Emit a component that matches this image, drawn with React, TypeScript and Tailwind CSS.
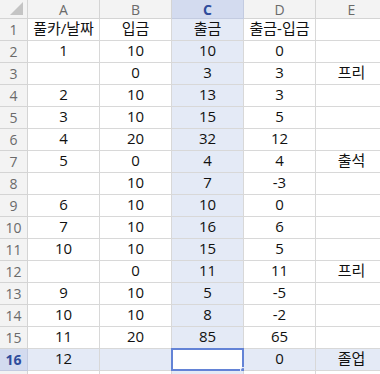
import React from 'react';

const cols = ['A', 'B', 'C', 'D', 'E'];

const rows: string[][] = [
    ['풀카/날짜', '입금', '출금', '출금-입금', ''],
    ['1', '10', '10', '0', ''],
    ['', '0', '3', '3', '프리'],
    ['2', '10', '13', '3', ''],
    ['3', '10', '15', '5', ''],
    ['4', '20', '32', '12', ''],
    ['5', '0', '4', '4', '출석'],
    ['', '10', '7', '-3', ''],
    ['6', '10', '10', '0', ''],
    ['7', '10', '16', '6', ''],
    ['10', '10', '15', '5', ''],
    ['', '0', '11', '11', '프리'],
    ['9', '10', '5', '-5', ''],
    ['10', '10', '8', '-2', ''],
    ['11', '20', '85', '65', ''],
    ['12', '', '', '0', '졸업'],
    ['', '', '', '', ''],
];

const SEL_ROW = 16;
const SEL_COL = 2;

export default function App() {
    return (
        <div
            className="w-[380px] h-[374px] overflow-hidden bg-white text-[#111] select-none"
            style={{ fontFamily: '"Open Sans", "Noto Sans CJK KR", sans-serif' }}
        >
            <div className="grid grid-cols-[28px_72px_72px_72px_72px_72px] w-max">
                {/* corner */}
                <div className="h-[19px] bg-[#f3f3f3] border-r border-b border-[#d4d4d4] relative">
                    <div className="absolute right-[4px] bottom-[3px] w-0 h-0 border-l-[13px] border-l-transparent border-b-[13px] border-b-[#c4c4c4]" />
                </div>
                {cols.map((c, i) => (
                    <div
                        key={c}
                        className={
                            i === SEL_COL
                                ? 'h-[19px] flex items-center justify-center bg-[#d3dbef] border-r border-b border-[#c3cbe0] text-[14px] font-bold text-[#2e4c9c]'
                                : 'h-[19px] flex items-center justify-center bg-[#f3f3f3] border-r border-b border-[#d4d4d4] text-[14px] text-[#6a6a6a]'
                        }
                    >
                        {c}
                    </div>
                ))}

                {rows.map((row, r) => {
                    const num = r + 1;
                    const rowSel = num === SEL_ROW;
                    // last row is only a sliver at the bottom edge, its number is out of view
                    const label = num <= SEL_ROW ? num : '';
                    return (
                        <React.Fragment key={r}>
                            <div
                                className={
                                    rowSel
                                        ? 'h-[22px] flex items-center justify-center bg-[#d3dbef] border-r border-b border-[#c3cbe0] text-[14px] font-bold text-[#2e4c9c]'
                                        : 'h-[22px] flex items-center justify-center bg-[#f3f3f3] border-r border-b border-[#d4d4d4] text-[14px] text-[#6a6a6a]'
                                }
                            >
                                {label}
                            </div>
                            {row.map((v, c) => {
                                const isSel = rowSel && c === SEL_COL;
                                const tinted = !isSel && (c === SEL_COL || rowSel);
                                return (
                                    <div
                                        key={c}
                                        className={
                                            'h-[22px] relative flex items-center justify-center border-r border-b border-[#d8d8d8] text-[15px] leading-none ' +
                                            (isSel ? 'bg-white' : tinted ? 'bg-[#e4eaf6]' : 'bg-white')
                                        }
                                    >
                                        <span className="-mt-[2px]">{v}</span>
                                        {isSel && (
                                            <>
                                                <div className="absolute -left-[1px] -top-[1px] -right-[1px] -bottom-[1px] border-2 border-[#6383d6]" />
                                                <div className="absolute -right-[3px] -bottom-[3px] w-[6px] h-[6px] rounded-full bg-[#6383d6] border border-white" />
                                            </>
                                        )}
                                    </div>
                                );
                            })}
                        </React.Fragment>
                    );
                })}
            </div>
        </div>
    );
}
